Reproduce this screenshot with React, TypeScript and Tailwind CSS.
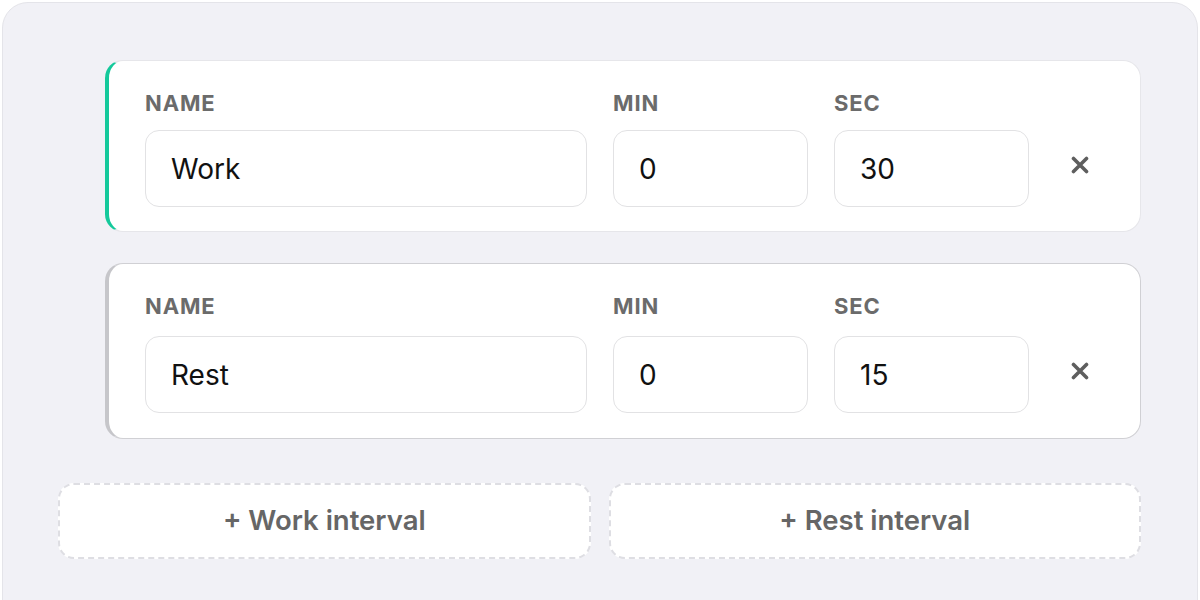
import { useState } from "react";

interface Interval {
  id: number;
  name: string;
  min: string;
  sec: string;
  kind: "work" | "rest";
}

const INITIAL: Interval[] = [
  { id: 1, name: "Work", min: "0", sec: "30", kind: "work" },
  { id: 2, name: "Rest", min: "0", sec: "15", kind: "rest" },
];

function Field({ label, value, width, gap, onChange }: { label: string; value: string; width: string; gap: string; onChange: (v: string) => void }) {
  return (
    <label className={`flex flex-col ${width}`}>
      <span className="h-[26px] text-[22px] leading-[26px] font-bold tracking-[0.04em] text-[#6b6b6b] uppercase">{label}</span>
      <input
        value={value}
        onChange={(e) => onChange(e.target.value)}
        className={`${gap} h-[77px] w-full rounded-[14px] border-[1.5px] border-[#e2e2e4] bg-white px-[25px] text-[28px] text-[#111] outline-none`}
      />
    </label>
  );
}

export default function App() {
  const [intervals, setIntervals] = useState<Interval[]>(INITIAL);

  const update = (id: number, key: "name" | "min" | "sec", v: string) =>
    setIntervals((xs) => xs.map((x) => (x.id === id ? { ...x, [key]: v } : x)));

  const add = (kind: "work" | "rest") =>
    setIntervals((xs) => [...xs, { id: Date.now(), name: kind === "work" ? "Work" : "Rest", min: "0", sec: kind === "work" ? "30" : "15", kind }]);

  return (
    <div className="h-[600px] overflow-hidden bg-white pt-[2px] font-['Inter',sans-serif]">
      <div className="mx-[2px] h-[640px] rounded-[26px] border border-[#e4e4e9] bg-[#f1f1f6] pl-[55px] pr-[56px] pt-[57px]">
        <div className="ml-[47px] flex flex-col gap-[31px]">
          {intervals.map((it) => {
            const work = it.kind === "work";
            const gap = work ? "mt-[14px]" : "mt-[17px]";
            return (
              <div
                key={it.id}
                className={`flex items-end gap-[26px] rounded-[18px] border border-l-4 bg-white pl-[36px] pr-[35px] pt-[29px] ${
                  work ? "border-[#e6e6ea] border-l-[#14c99b] pb-[24px]" : "border-[#d0d0d4] border-l-[#c6c6ca] pb-[25px]"
                }`}
              >
                <Field label="Name" value={it.name} width="w-[442px]" gap={gap} onChange={(v) => update(it.id, "name", v)} />
                <Field label="Min" value={it.min} width="w-[195px]" gap={gap} onChange={(v) => update(it.id, "min", v)} />
                <Field label="Sec" value={it.sec} width="w-[195px]" gap={gap} onChange={(v) => update(it.id, "sec", v)} />
                <button
                  onClick={() => setIntervals((xs) => xs.filter((x) => x.id !== it.id))}
                  className="flex h-[77px] w-[50px] items-center justify-center pb-[8px] text-[#5e5e5e]"
                  aria-label="Remove"
                >
                  <svg width="18" height="18" viewBox="0 0 18 18" fill="none" stroke="currentColor" strokeWidth="3.6" strokeLinecap="round">
                    <path d="M2.5 2.5l13 13M15.5 2.5l-13 13" />
                  </svg>
                </button>
              </div>
            );
          })}
        </div>

        <div className="mt-[44px] grid grid-cols-2 gap-[18px]">
          <button
            onClick={() => add("work")}
            className="h-[76px] rounded-[16px] border-2 border-dashed border-[#dedee3] bg-white text-[27.5px] font-semibold text-[#666]"
          >
            + Work interval
          </button>
          <button
            onClick={() => add("rest")}
            className="h-[76px] rounded-[16px] border-2 border-dashed border-[#dedee3] bg-white text-[27.5px] font-semibold text-[#666]"
          >
            + Rest interval
          </button>
        </div>
      </div>
    </div>
  );
}
